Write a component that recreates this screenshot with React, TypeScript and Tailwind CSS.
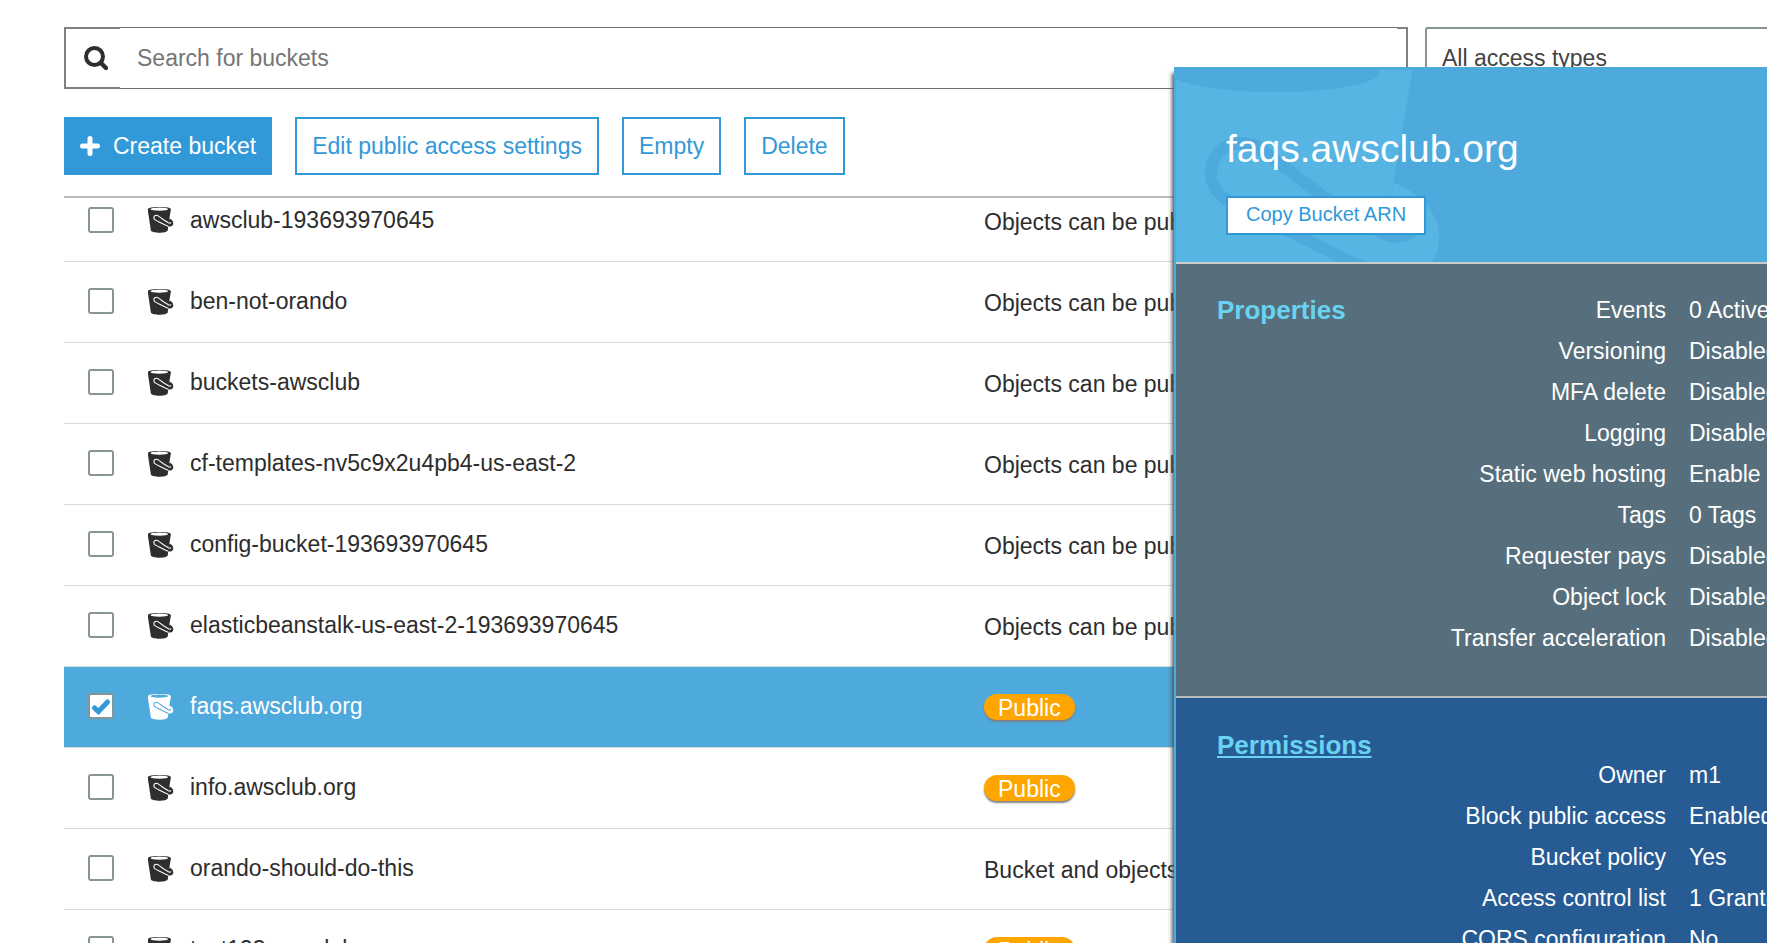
import React from "react";

type Access = "objects" | "public" | "private";

const buckets: { name: string; access: Access; selected?: boolean }[] = [
  { name: "awsclub-193693970645", access: "objects" },
  { name: "ben-not-orando", access: "objects" },
  { name: "buckets-awsclub", access: "objects" },
  { name: "cf-templates-nv5c9x2u4pb4-us-east-2", access: "objects" },
  { name: "config-bucket-193693970645", access: "objects" },
  { name: "elasticbeanstalk-us-east-2-193693970645", access: "objects" },
  { name: "faqs.awsclub.org", access: "public", selected: true },
  { name: "info.awsclub.org", access: "public" },
  { name: "orando-should-do-this", access: "private" },
  { name: "test123.awsclub.org", access: "public" },
];

const properties = [
  ["Events", "0 Active notifications"],
  ["Versioning", "Disabled"],
  ["MFA delete", "Disabled"],
  ["Logging", "Disabled"],
  ["Static web hosting", "Enable website hosting"],
  ["Tags", "0 Tags"],
  ["Requester pays", "Disabled"],
  ["Object lock", "Disabled"],
  ["Transfer acceleration", "Disabled"],
];

const permissions = [
  ["Owner", "m1"],
  ["Block public access", "Enabled"],
  ["Bucket policy", "Yes"],
  ["Access control list", "1 Grantee"],
  ["CORS configuration", "No"],
];

// The ink is the bucket's body; the gap colour cuts out the opening and the handle's outline.
function Bucket({
  className,
  viewBox = "-34 -20 306 306",
  ink,
  gap,
  gapStroke,
}: {
  className: string;
  viewBox?: string;
  ink: string;
  gap: string;
  gapStroke: string;
}) {
  return (
    <svg viewBox={viewBox} className={className} aria-hidden="true">
      <path
        d="M-38 6C-38 -10 22 -19 99 -19S236 -10 236 6L215 130L198 258C192 276 145 284 99 284S6 276 0 258Z"
        className={ink}
      />
      <ellipse cx="99" cy="6" rx="104" ry="19" className={gap} />
      <path
        d="M218 116C242 124 263 145 263 170C263 190 252 208 226 210C216 210 208 207 198 203Z"
        className={ink}
      />
      <path
        d="M238 162C232 171 218 172 206 166L148 130L95 90C84 80 76 76 66 76C46 76 35 90 35 106C35 118 42 128 54 135C80 150 100 157 121 168L175 195L204 207"
        fill="none"
        strokeWidth="12"
        className={gapStroke}
      />
    </svg>
  );
}

function Details({ rows, labelWidth }: { rows: string[][]; labelWidth: string }) {
  return (
    <dl>
      {rows.map(([label, value]) => (
        <div key={label} className="flex h-[41px] gap-[23px] whitespace-nowrap leading-[26px]">
          <dt className={`${labelWidth} shrink-0 text-right`}>{label}</dt>
          <dd>{value}</dd>
        </div>
      ))}
    </dl>
  );
}

const outline =
  "h-[58px] border-2 border-[#3199d8] bg-white px-[15px] text-[#3199d8] whitespace-nowrap";

export default function App() {
  return (
    <div className="relative h-screen overflow-hidden bg-white font-['Liberation_Sans',Arial,sans-serif] text-[23px] text-[#2d2d2d]">
      <main className="flex h-full flex-col pl-16 pt-[27px]">
        <div className="flex gap-[17px]">
          <label className="flex h-[62px] min-w-0 flex-1">
            <span className="flex w-14 shrink-0 items-center border-2 border-r-0 border-[#808080] pl-[18px]">
              <svg viewBox="0 0 24 24" className="size-6" aria-hidden="true">
                <circle cx="10.500" cy="10.500" r="8.500" fill="none" strokeWidth="4" className="stroke-[#2d2f2f]" />
                <path d="M17 17L22 22" strokeWidth="4.500" strokeLinecap="round" className="stroke-[#2d2f2f]" />
              </svg>
            </span>
            <input
              aria-label="Search for buckets"
              placeholder="Search for buckets"
              className="min-w-0 flex-1 border-y border-[#707070] px-[17px] outline-none placeholder:text-[#757575]"
            />
            <span className="w-[11px] shrink-0 border-2 border-l-0 border-[#808080]" />
          </label>
          <select
            aria-label="Access type"
            className="h-[62px] w-[342px] shrink-0 appearance-none rounded-l-[3px] border-2 border-r-0 border-[#879596] bg-white px-[15px] text-[#444]"
          >
            <option>All access types</option>
          </select>
        </div>

        <div className="mt-7 flex gap-[23px]">
          <button className="flex h-[58px] items-center gap-[13px] bg-[#3199d8] px-4 text-white whitespace-nowrap">
            <svg viewBox="0 0 20 20" className="size-5" aria-hidden="true">
              <path d="M10 2.500V17.500M2.500 10H17.500" strokeWidth="5" strokeLinecap="round" className="stroke-white" />
            </svg>
            Create bucket
          </button>
          <button className={outline}>Edit public access settings</button>
          <button className={outline}>Empty</button>
          <button className={outline}>Delete</button>
        </div>

        <div className="mt-[21px] min-h-0 flex-1 overflow-hidden border-t-2 border-[#bbb]">
          <table className="-mt-[18px] w-full table-fixed border-collapse">
            <tbody>
              {buckets.map((b) => (
                <tr
                  key={b.name}
                  className={
                    b.selected
                      ? "h-[81px] border-b border-[#d5dbdb] bg-[#4ea9dd] text-white"
                      : "h-[81px] border-b border-[#d5dbdb]"
                  }
                >
                  <td className="w-[84px] pb-px pl-6">
                    <span className="relative block size-[26px]">
                      <input
                        type="checkbox"
                        aria-label={b.name}
                        defaultChecked={b.selected}
                        className="peer block size-[26px] appearance-none rounded-[3px] border-2 border-[#879596] bg-white"
                      />
                      <svg
                        viewBox="0 0 26 26"
                        className="pointer-events-none absolute inset-0 hidden size-[26px] peer-checked:block"
                        aria-hidden="true"
                      >
                        <path d="M6.500 15L10.500 18.500L19.500 9" fill="none" strokeWidth="5" strokeLinecap="round" className="stroke-[#3199d8]" />
                      </svg>
                    </span>
                  </td>
                  <td className="w-[836px]">
                    <div className="flex items-center gap-4">
                      {b.selected ? (
                        <Bucket className="size-[26px]" ink="fill-white" gap="fill-[#4ea9dd]" gapStroke="stroke-[#4ea9dd]" />
                      ) : (
                        <Bucket className="size-[26px]" ink="fill-[#2d2f2f]" gap="fill-white" gapStroke="stroke-white" />
                      )}
                      {b.name}
                    </div>
                  </td>
                  <td className="whitespace-nowrap pt-[3px]">
                    {b.access === "public" ? (
                      <span className="inline-block h-[26px] rounded-full bg-[#ffa500] px-3.5 leading-[28px] text-white shadow-[0_2px_2px_#808080]">
                        Public
                      </span>
                    ) : b.access === "private" ? (
                      "Bucket and objects not public"
                    ) : (
                      "Objects can be public"
                    )}
                  </td>
                </tr>
              ))}
            </tbody>
          </table>
        </div>
      </main>

      <aside className="absolute top-[67px] right-0 bottom-0 flex w-[593px] flex-col overflow-hidden border-l-2 border-[#4ea9dd] text-white shadow-[-2px_6px_4px_#555]">
        <header className="relative h-[195px] shrink-0 bg-[#4ea9dd] pl-[50px]">
          <Bucket
            className="absolute bottom-0 left-0 h-48 w-[270px]"
            viewBox="0 3 270 192"
            ink="fill-[#57b5e4]"
            gap="fill-[#4ea9dd]"
            gapStroke="stroke-[#4ea9dd]"
          />
          <h1 className="relative pt-[58px] text-[39px] leading-[48px]">faqs.awsclub.org</h1>
          <button className="relative mt-[23px] block h-[39px] border-2 border-[#3199d8] bg-white px-[18px] pb-[3px] text-[20px] text-[#3199d8]">
            Copy Bucket ARN
          </button>
        </header>
        <section className="flex h-[434px] shrink-0 border-t-2 border-[#ccc] bg-[#576f7c] pl-[41px] pt-[33px]">
          <h2 className="w-[150px] shrink-0 text-[26px] leading-[26px] font-bold text-[#69d3f2]">Properties</h2>
          <Details rows={properties} labelWidth="w-[299px]" />
        </section>
        <section className="flex-1 border-t-2 border-[#bbb] bg-[#265b93] pl-[41px] pt-[30px]">
          <h2 className="text-[26px] leading-[34px] font-bold text-[#69d3f2]">
            <a href="#permissions" className="underline">
              Permissions
            </a>
          </h2>
          <Details rows={permissions} labelWidth="w-[449px]" />
        </section>
      </aside>
    </div>
  );
}
